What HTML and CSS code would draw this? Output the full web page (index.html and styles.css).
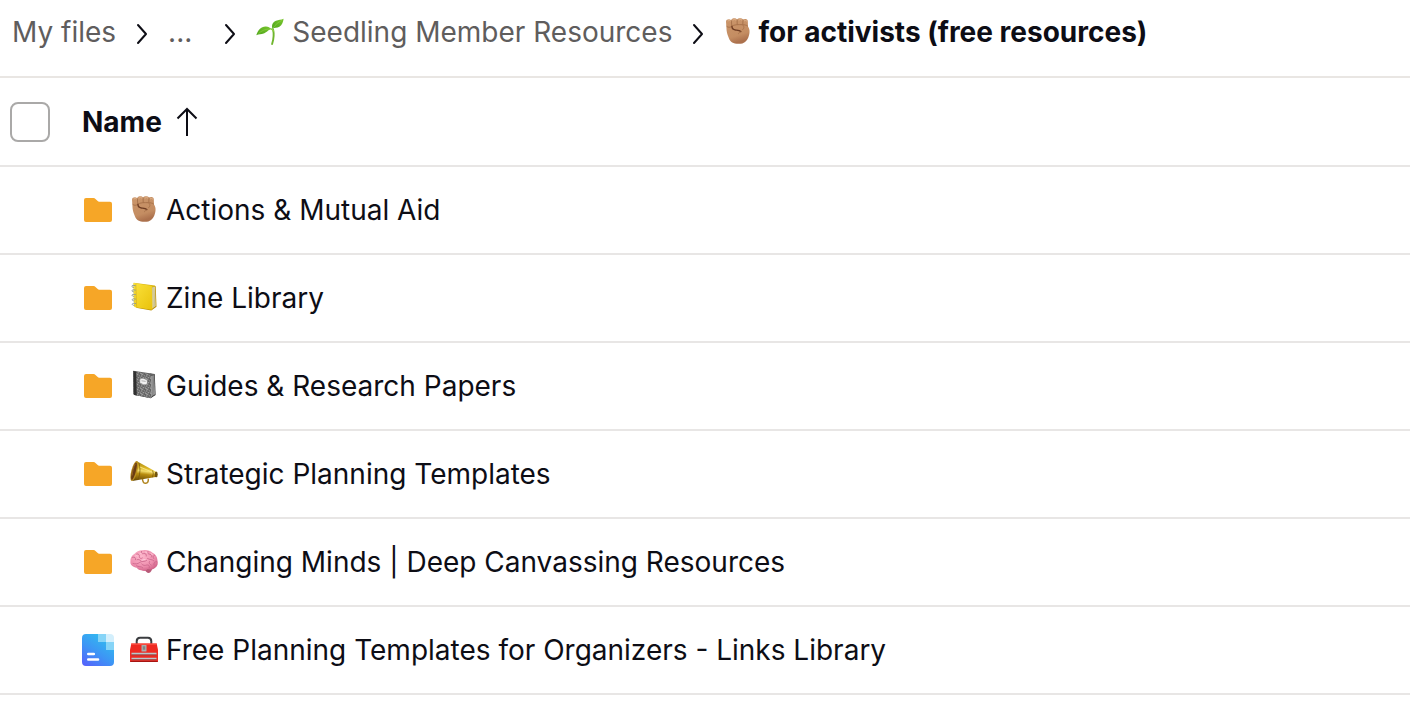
FILE: index.html
```html
<!DOCTYPE html>
<html lang="en">
<head>
  <meta charset="UTF-8" />
  <meta name="viewport" content="width=device-width, initial-scale=1.0" />
  <title>for activists (free resources) - My files</title>
  <link rel="stylesheet" href="styles.css">
</head>
<body>

  <!-- Shared icons -->
  <svg class="icon-defs" aria-hidden="true">
    <defs>
      <linearGradient id="skin" x1="0" y1="0" x2="0.3" y2="1">
        <stop offset="0" stop-color="#cb966b" />
        <stop offset="0.75" stop-color="#c48d62" />
        <stop offset="1" stop-color="#ac714d" />
      </linearGradient>
      <linearGradient id="leaf" x1="0" y1="1" x2="1" y2="0">
        <stop offset="0" stop-color="#4fa51c" />
        <stop offset="1" stop-color="#79c62d" />
      </linearGradient>
      <linearGradient id="yellow" x1="0" y1="0" x2="1" y2="1">
        <stop offset="0" stop-color="#fbe23c" />
        <stop offset="1" stop-color="#e9c20c" />
      </linearGradient>
      <linearGradient id="brass" x1="0.5" y1="0" x2="0.35" y2="1">
        <stop offset="0" stop-color="#9c7a0c" />
        <stop offset="0.35" stop-color="#dcb726" />
        <stop offset="0.5" stop-color="#f3dd6c" />
        <stop offset="0.65" stop-color="#b98d0f" />
        <stop offset="1" stop-color="#6b4b08" />
      </linearGradient>
      <radialGradient id="pink" cx="0.4" cy="0.3" r="0.8">
        <stop offset="0" stop-color="#fdb6cb" />
        <stop offset="0.6" stop-color="#ee8fae" />
        <stop offset="1" stop-color="#c9577f" />
      </radialGradient>
      <linearGradient id="doc" x1="0.1" y1="1" x2="0.7" y2="0.1">
        <stop offset="0" stop-color="#5562fb" />
        <stop offset="0.5" stop-color="#3d95f5" />
        <stop offset="1" stop-color="#32b9ef" />
      </linearGradient>
      <pattern id="marble" width="5" height="5" patternUnits="userSpaceOnUse">
        <rect width="5" height="5" fill="#747474" />
        <path d="M0 1h1v1h1M3 0l1 1M2 3l1-1M4 3v1M1 4h1" stroke="#a6a6a6" stroke-width="0.8" fill="none" />
        <path d="M1 0h1M4 2h1M0 3h1M3 4h1" stroke="#505050" stroke-width="0.9" />
      </pattern>
    </defs>

    <symbol id="chevron" viewBox="0 0 12 22">
      <path d="M2 2l8 9-8 9" fill="none" stroke="currentColor" stroke-width="2" stroke-linecap="round" stroke-linejoin="round" />
    </symbol>

    <symbol id="folder" viewBox="0 0 32 32">
      <path d="M2 6a2 2 0 0 1 2-2h7.500a3 3 0 0 1 2 .9L15.400 6.800a3 3 0 0 0 2 .9H28a2 2 0 0 1 2 2V26a2 2 0 0 1-2 2H4a2 2 0 0 1-2-2z" fill="#f6a627" />
    </symbol>

    <symbol id="fist" viewBox="0 0 28 28">
      <path d="M2 3.500C2 1.200 5.800.6 7.200 2.200 7.600-.1 12-.3 13 1.400 14.200-.4 18.200-.2 19 1.500c1.500-1.100 4.600-.7 4.800 1.400l.2 5.700c2.200 3 1.900 7.200.3 10.800-1.500 3.700-4 6.300-9.400 6.400-5.600.1-8.500-2-9.900-5.400-1-2.600-2-5-2.400-8z" fill="url(#skin)" />
      <path d="M7.300 2.400l.5 5.600M13.100 1.500l.1 5M19 1.600l-.2 4.900" stroke="#9a6540" stroke-width="0.700" fill="none" />
      <path d="M2.600 8.200c1.300 1.500 3.800 1.400 5.300-.1 2-1.500 6.800-1.600 10.400-1.400 2 .1 4 .2 5.500 1.500" stroke="#9c663f" stroke-width="0.700" fill="none" />
      <path d="M8 8.400c-.2 1.900 1.200 3.200 3.500 3.600 2 .3 4 .3 5.300 1.600" stroke="#6d3b22" stroke-width="1.400" fill="none" stroke-linecap="round" />
      <path d="M16.800 13.800c-1.300.2-2 .9-2.300 2M19 7.200c1.600 1.400 1 3.200-.3 4.500" stroke="#a06b45" stroke-width="0.700" fill="none" stroke-linecap="round" />
      <path d="M4 2.800q1.300-.9 2.400 0M9 1.900q1.500-.9 3 0M15 1.900q1.500-.9 2.900 0M20.300 2.700q1.300-.7 2.400.2" stroke="#deb189" stroke-width="0.900" fill="none" stroke-linecap="round" />
    </symbol>

    <symbol id="seedling" viewBox="0 0 28 28">
      <path d="M17 11.200c1.200 4.800.8 9.500-.9 14.800" stroke="#6fb52d" stroke-width="1.900" fill="none" stroke-linecap="round" />
      <path d="M14.800 11c1.400 0 2.200.4 2.900 2.600" stroke="#8fd144" stroke-width="1.500" fill="none" />
      <path d="M.3 17.300C1.800 12 5 8.600 9.500 8.400c2.600-.2 4.200 1.300 6.200 2.600-3.400.4-4.500 3.200-8 4.600-2.400.9-4.900.5-7.400 1.700z" fill="url(#leaf)" />
      <path d="M16.500 10.800c-1.300-4 .5-6.800 3.500-8C22.500 1.700 25 2 27.600.8 27.200 4 26.200 7 23.400 8.800c-2.300 1.500-4.900.6-6.900 2z" fill="url(#leaf)" />
      <path d="M2.500 15.700c3-3.200 7-4.800 12.300-4.800M17.200 10c2.200-3.400 5.200-5.900 8.800-7.700" stroke="#8bcf40" stroke-width="0.700" fill="none" />
    </symbol>

    <symbol id="ledger" viewBox="0 0 28 28">
      <path d="M6 23.800l15.300 2.600 5.200-3.700L25.700 2.300 21 2z" fill="#b88d05" />
      <path d="M21.300 3.500l3.700-.7.700 19.300-4.500 3.200z" fill="#e6dca6" />
      <path d="M22.700 3.200l.5 20.500M24 3l.7 19.600" stroke="#a9a17c" stroke-width="0.500" />
      <path d="M3.600-1.200L24.800 1.500l.9 1-4.400.8L3.600-.6z" fill="#d9b512" />
      <path d="M3.600-1L21 1.800q1 .2 1 1.200l.4 21.700q0 1.200-1.200 1L5 23.200q-1-.2-1-1.200L3.200-.2z" fill="url(#yellow)" />
      <path d="M5.800.2l.8 22.500" stroke="#d2b21b" stroke-width="0.700" />
      <path d="M5.600 1.700c-4.500-1.500-4.800 1.800-1.500 1.700M5.700 6.200c-4.500-1.500-4.800 1.800-1.500 1.700M5.800 10.700c-4.500-1.500-4.800 1.800-1.500 1.700M5.900 15.200c-4.500-1.500-4.800 1.800-1.500 1.700M6 19.700c-4.500-1.500-4.800 1.800-1.500 1.700" stroke="#8d9a9a" stroke-width="1" fill="none" />
    </symbol>

    <symbol id="notebook" viewBox="0 0 28 28">
      <path d="M4 22.800l16.600 3.500 5-3.300L24.800 2.500 20 1.500z" fill="#303030" />
      <path d="M20.700 3.800l3.500-.6.800 19-3.900 2.900z" fill="#a9a9a9" />
      <path d="M22 3.500l.4 20.500M23.300 3.500l.6 19.500" stroke="#666" stroke-width="0.600" />
      <path d="M3.300-1.300L24.800 2v1l-4.200.6L3.300-.2z" fill="#626262" />
      <path d="M3.300-.8L20 2.200q1 .2 1 1.200l.4 21.500q0 1.200-1.200 1L4.500 22.900q-1-.2-1-1.200z" fill="url(#marble)" />
      <path d="M3.300-1L6.300-.3l.5 23.700-2.300-.5q-1-.2-1-1.200z" fill="#303030" />
      <path d="M9.700 7q1.500 0 2-.8 2.300-.3 3.500.9.900.8 2.100.7l.2 4.200q-1.300-.1-1.800.8-2.500.3-3.700-.8-.9-.8-2.200-.6z" fill="#f1f1f1" stroke="#666" stroke-width="0.500" />
      <path d="M11.500 8.800l4.200.6" stroke="#888" stroke-width="0.600" />
    </symbol>

    <symbol id="megaphone" viewBox="0 0 28 28">
      <path d="M12.500 19c.2 3.300 1.500 4.500 3.300 4.300 1.700-.2 2.700-1.900 2.500-4.700" fill="none" stroke="#b28722" stroke-width="1.500" />
      <path d="M6.500.9L26 11.800c1.700.9 1.300 4.900-.5 5.200L2.300 21z" fill="url(#brass)" />
      <ellipse cx="4.300" cy="11" rx="3" ry="10.400" transform="rotate(15 4.300 11)" fill="#b98e20" />
      <ellipse cx="4" cy="11.200" rx="1.800" ry="9" transform="rotate(15 4 11.200)" fill="#6a3c14" />
      <path d="M2.200 15.500c.3-4 1.300-8.300 3-11.500" stroke="#9a6722" stroke-width="0.900" fill="none" />
      <path d="M22.600 10.500q1.500 3-.2 6.800M9 3.100q2.300 7-.7 16.200" stroke="#74540d" stroke-width="0.700" fill="none" />
      <path d="M10 7l12.300 5.200" stroke="#f8e789" stroke-width="0.900" />
      <ellipse cx="26.200" cy="14.400" rx="1.500" ry="2.800" fill="#70530e" />
    </symbol>

    <symbol id="brain" viewBox="0 0 28 28">
      <path d="M16 20.500c1.500-.8 5-1.200 6.300-.5-.3 2.400-1.600 4.500-3.600 5.100-1.800-.4-3.300-2-4.700-3.900z" fill="#b85a78" />
      <path d="M.4 13.700C.1 10 1.800 7.600 4.300 6 6.300 3.300 9.600 2 13 2.200c3.500-.6 7 .2 9.500 2.500 3 1.400 4.800 4 4.900 7.300 1 3.200.2 6.500-2.500 8-2.100 1.600-4.900 1.900-7.400 1.100-1 2-3.500 2.200-6.300 1.200-2.300-.2-3.300-.9-4.500-2.500C3.300 19 0 17.300.4 13.700z" fill="url(#pink)" />
      <path d="M3 15.500c2.500.8 5 .4 6.700-1.100s4.700-.3 6.800-1.800M2.500 9.300c2.300-.8 3.600.7 3 2.500M6.700 6c1.800-.5 3 .8 2.700 2.500-.2 1.700 1.500 2.600 3 1.500M11.500 3.300c-1 1.500.5 2.800 2.200 2.300 1.900-.5 3 .7 2.600 2.500M18 3.400c-1 1.500.2 2.700 1.900 2.900 1.900.2 2.400 1.600 1.400 2.900M24.500 7.200c-1.700.4-1.900 2.400-.8 3.400M17.500 10.500c2 1.400 4.800.6 6.500 2.400M26.600 13.600c-2.300.1-3.300 1.700-2.600 3.500M19.500 13.500c-1.100 1.800.6 3 1.700 3.600M11.700 16c1.500 1.800 3.200 1.600 5.200 1 1.800-.5 3 .9 2.400 2.800M6.500 17.800c2 1.500 4.700 0 6.300 2M7 11.700c1.600-.5 3 .1 3.900 1.200" stroke="#c9648a" stroke-width="0.800" fill="none" stroke-linecap="round" />
      <path d="M5.500 8c.7-.6 1.500-.5 2 0M10 5.500q1-.8 1.500 0M15.500 4q1.500-.3 1.700.7M12.500 12q1.500-.9 2.800-.5M21 5.500q1.300.4 1.600 1.300" stroke="#ffd2df" stroke-width="0.800" fill="none" stroke-linecap="round" />
    </symbol>

    <symbol id="toolbox" viewBox="0 0 28 28">
      <path d="M6.700 8V5.300c0-2.200 1.200-3.500 3.300-3.500h8c2.100 0 3.300 1.300 3.300 3.500V8" fill="none" stroke="#3b3d40" stroke-width="2" />
      <path d="M1.300 7.500h25.400L28 14v11.300q0 .7-.7.700H.7q-.7 0-.7-.7V14z" fill="#ee2a22" />
      <path d="M1.300 7.500h25.400l.3 1.300H1z" fill="#fb5346" />
      <path d="M.3 25.500h27.400" stroke="#a71410" stroke-width="1" />
      <path d="M1.500 17.600h25M1.500 22.500h25" stroke="#b9c8ca" stroke-width="1.600" />
      <path d="M1.500 18.900h25M1.500 23.800h25" stroke="#6f5557" stroke-width="0.700" />
      <rect x="11.500" y="9" width="5" height="6.500" rx="0.500" fill="#a9adad" />
      <path d="M12.800 10.300h2.400v3.400h-2.400z" fill="#808585" />
    </symbol>

    <symbol id="document" viewBox="0 0 32 32">
      <path d="M4 0H16V8H24V16H32V28a4 4 0 0 1-4 4H4a4 4 0 0 1-4-4V4a4 4 0 0 1 4-4z" fill="url(#doc)" />
      <path d="M16 0h8v8h-8zM24 8h8v8h-8z" fill="#86d4f7" />
      <path d="M24 0h4a4 4 0 0 1 4 4v4h-8z" fill="#d3effc" />
      <path d="M6.300 20h5.500M6.300 25.500H16" stroke="#fff" stroke-width="2.600" stroke-linecap="round" />
    </symbol>
  </svg>

  <nav class="breadcrumbs" aria-label="Breadcrumb">
    <a href="#">My files</a>
    <svg class="chevron"><use href="#chevron" /></svg>
    <button type="button" class="more-btn">...</button>
    <svg class="chevron"><use href="#chevron" /></svg>
    <a href="#"><svg class="emoji"><use href="#seedling" /></svg>Seedling Member Resources</a>
    <svg class="chevron"><use href="#chevron" /></svg>
    <span class="current" aria-current="page"><svg class="emoji"><use href="#fist" /></svg>for activists (free resources)</span>
  </nav>

  <table class="file-table">
    <thead>
      <tr>
        <th class="select-col"><input type="checkbox" class="select-all" aria-label="Select all" /></th>
        <th aria-sort="ascending">
          <button type="button" class="sort-btn">Name
            <svg class="arrow" viewBox="0 0 22 30"><path d="M11 2v27M1.500 11.500L11 2l9.500 9.500" fill="none" stroke="currentColor" stroke-width="2" /></svg>
          </button>
        </th>
      </tr>
    </thead>
    <tbody>
      <tr>
        <td></td>
        <td><a href="#" class="file"><svg class="file-icon"><use href="#folder" /></svg><svg class="emoji"><use href="#fist" /></svg>Actions &amp; Mutual Aid</a></td>
      </tr>
      <tr>
        <td></td>
        <td><a href="#" class="file"><svg class="file-icon"><use href="#folder" /></svg><svg class="emoji"><use href="#ledger" /></svg>Zine Library</a></td>
      </tr>
      <tr>
        <td></td>
        <td><a href="#" class="file"><svg class="file-icon"><use href="#folder" /></svg><svg class="emoji"><use href="#notebook" /></svg>Guides &amp; Research Papers</a></td>
      </tr>
      <tr>
        <td></td>
        <td><a href="#" class="file"><svg class="file-icon"><use href="#folder" /></svg><svg class="emoji"><use href="#megaphone" /></svg>Strategic Planning Templates</a></td>
      </tr>
      <tr>
        <td></td>
        <td><a href="#" class="file"><svg class="file-icon"><use href="#folder" /></svg><svg class="emoji"><use href="#brain" /></svg>Changing Minds | Deep Canvassing Resources</a></td>
      </tr>
      <tr>
        <td></td>
        <td><a href="#" class="file"><svg class="file-icon"><use href="#document" /></svg><svg class="emoji"><use href="#toolbox" /></svg>Free Planning Templates for Organizers - Links Library</a></td>
      </tr>
    </tbody>
  </table>

</body>
</html>
```

FILE: styles.css
```css
* {
  box-sizing: border-box;
}

body {
  margin: 0;
  font-family: Inter, 'Liberation Sans', sans-serif;
  font-size: 28px;
  line-height: 40px;
  color: #0d0d15;
  background: #fff;
}

a {
  color: inherit;
  text-decoration: none;
}

button {
  padding: 0;
  border: none;
  background: none;
  font: inherit;
  color: inherit;
  cursor: pointer;
}

svg {
  flex-shrink: 0;
}

.icon-defs {
  position: absolute;
  width: 0;
  height: 0;
}

.emoji {
  width: 28px;
  height: 28px;
  margin-right: 8px;
}

/* the drawings reach a little past the 28px box */
.emoji,
symbol {
  overflow: visible;
}

/* Breadcrumbs */
.breadcrumbs {
  display: flex;
  align-items: center;
  gap: 20px;
  padding: 12px 12px 24px;
  border-bottom: 2px solid #e9e6e3;
  white-space: nowrap;
}

.breadcrumbs a,
.breadcrumbs .current {
  display: flex;
  align-items: center;
}

.breadcrumbs a,
.more-btn {
  color: #5f5d5d;
}

.breadcrumbs .current {
  font-weight: 700;
}

.current .emoji {
  margin-right: 6px;
}

.more-btn {
  padding-right: 12px;
}

.chevron {
  width: 12px;
  height: 22px;
  margin-top: 4px;
}

/* File list */
.file-table {
  width: 100%;
  border-collapse: separate;
  border-spacing: 0;
}

.file-table th,
.file-table td {
  height: 88px;
  padding: 0;
  border-bottom: 2px solid #e8e6e5;
  text-align: left;
  vertical-align: middle;
}

.file-table th {
  height: 89px;
  font-weight: 700;
}

.file-table .select-col {
  width: 82px;
  padding-left: 10px;
}

.select-all {
  appearance: none;
  display: block;
  width: 40px;
  height: 40px;
  margin: 0;
  border: 2px solid #aaa9a8;
  border-radius: 8px;
  background: #fff;
}

.select-all:checked {
  background: #0d0d15;
}

.sort-btn {
  display: flex;
  align-items: center;
  gap: 14px;
}

.arrow {
  width: 22px;
  height: 30px;
}

.file {
  display: flex;
  align-items: center;
}

.file-icon {
  width: 32px;
  height: 32px;
  margin-right: 16px;
}
```
